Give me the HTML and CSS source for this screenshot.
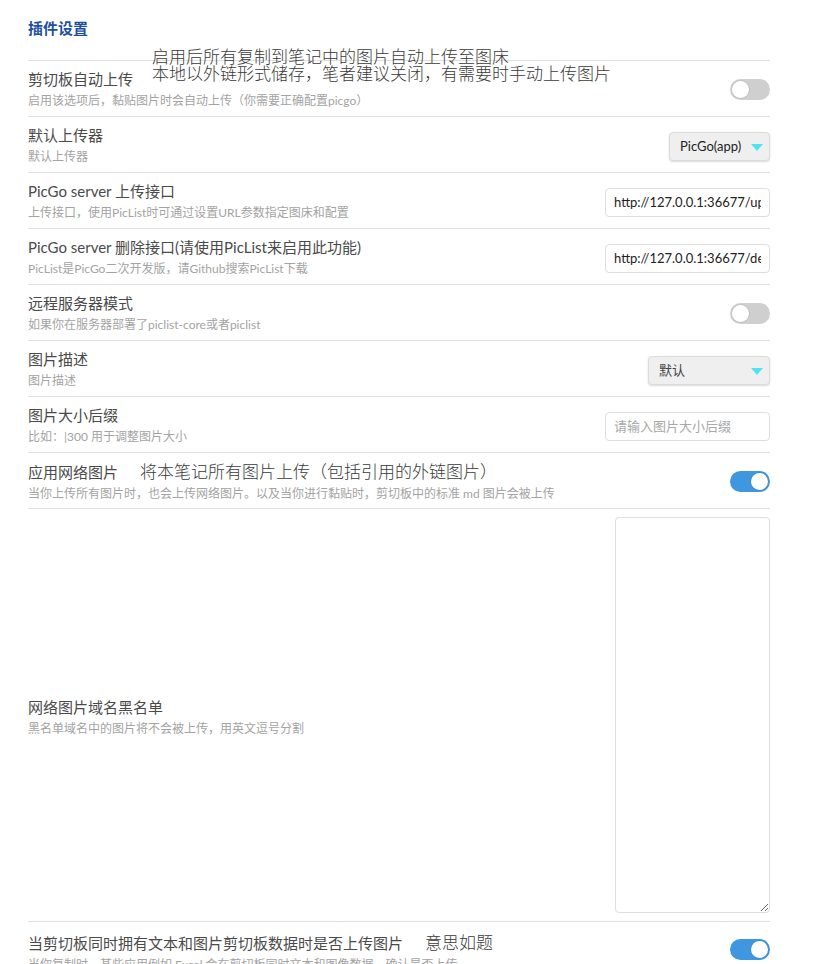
FILE: index.html
```html
<!DOCTYPE html>
<html lang="zh-CN">
<head>
<meta charset="utf-8">
<title>插件设置</title>
<link rel="stylesheet" href="styles.css">
</head>
<body>
<div class="settings">
  <h3 class="title">插件设置</h3>

  <div class="item">
    <div class="info">
      <div class="name">剪切板自动上传</div>
      <div class="desc">启用该选项后，黏贴图片时会自动上传（你需要正确配置picgo）</div>
    </div>
    <div class="control"><span class="toggle"></span></div>
    <div class="note note-float">启用后所有复制到笔记中的图片自动上传至图床<br>本地以外链形式储存，笔者建议关闭，有需要时手动上传图片</div>
  </div>

  <div class="item">
    <div class="info">
      <div class="name">默认上传器</div>
      <div class="desc">默认上传器</div>
    </div>
    <div class="control"><div class="select sel-uploader">PicGo(app)<span class="arrow"></span></div></div>
  </div>

  <div class="item">
    <div class="info">
      <div class="name">PicGo server 上传接口</div>
      <div class="desc">上传接口，使用PicList时可通过设置URL参数指定图床和配置</div>
    </div>
    <div class="control"><input class="text" type="text" value="http://127.0.0.1:36677/upload"></div>
  </div>

  <div class="item">
    <div class="info">
      <div class="name">PicGo server 删除接口(请使用PicList来启用此功能)</div>
      <div class="desc">PicList是PicGo二次开发版，请Github搜索PicList下载</div>
    </div>
    <div class="control"><input class="text" type="text" value="http://127.0.0.1:36677/delete"></div>
  </div>

  <div class="item">
    <div class="info">
      <div class="name">远程服务器模式</div>
      <div class="desc">如果你在服务器部署了piclist-core或者piclist</div>
    </div>
    <div class="control"><span class="toggle"></span></div>
  </div>

  <div class="item">
    <div class="info">
      <div class="name">图片描述</div>
      <div class="desc">图片描述</div>
    </div>
    <div class="control"><div class="select sel-desc">默认<span class="arrow"></span></div></div>
  </div>

  <div class="item">
    <div class="info">
      <div class="name">图片大小后缀</div>
      <div class="desc">比如：|300 用于调整图片大小</div>
    </div>
    <div class="control"><input class="text" type="text" placeholder="请输入图片大小后缀"></div>
  </div>

  <div class="item">
    <div class="info">
      <div class="name">应用网络图片<span class="note note-inline">将本笔记所有图片上传（包括引用的外链图片）</span></div>
      <div class="desc">当你上传所有图片时，也会上传网络图片。以及当你进行黏贴时，剪切板中的标准 md 图片会被上传</div>
    </div>
    <div class="control"><span class="toggle on"></span></div>
  </div>

  <div class="item item-tall">
    <div class="info">
      <div class="name">网络图片域名黑名单</div>
      <div class="desc">黑名单域名中的图片将不会被上传，用英文逗号分割</div>
    </div>
    <div class="control"><textarea class="area"></textarea></div>
  </div>

  <div class="item item-last">
    <div class="info">
      <div class="name">当剪切板同时拥有文本和图片剪切板数据时是否上传图片<span class="note note-inline">意思如题</span></div>
      <div class="desc">当你复制时，某些应用例如 Excel 会在剪切板同时文本和图像数据，确认是否上传。</div>
    </div>
    <div class="control"><span class="toggle on"></span></div>
  </div>
</div>
</body>
</html>
```

FILE: styles.css
```css
html, body {
  margin: 0;
  padding: 0;
  background: #ffffff;
  overflow: hidden;
}

body {
  font-family: "Lato", "Noto Sans CJK SC", sans-serif;
  color: #2e2e2e;
}

.settings {
  width: 742px;
  margin-left: 28px;
  padding-top: 16px;
}

.title {
  margin: 0 0 20px 0;
  font-size: 15px;
  line-height: 24px;
  font-weight: 700;
  color: #1f4f9f;
  font-family: "Noto Sans CJK SC", sans-serif;
}

.item {
  position: relative;
  display: flex;
  align-items: center;
  justify-content: space-between;
  border-top: 1px solid #e0e0e0;
  height: 55px;
}

.info {
  display: flex;
  flex-direction: column;
  gap: 3px;
  padding-top: 1px;
}

.name {
  font-size: 15px;
  line-height: 20px;
  color: #4a4a4a;
  white-space: nowrap;
}

.desc {
  font-size: 12px;
  line-height: 17px;
  color: #a3a3a3;
  white-space: nowrap;
}

.control {
  display: flex;
  align-items: center;
  flex-shrink: 0;
}

.note {
  font-family: "Noto Sans CJK SC", sans-serif;
  font-weight: 300;
  font-size: 17px;
  line-height: 17px;
  color: #3a3a3a;
  white-space: nowrap;
}

.note-float {
  position: absolute;
  left: 124px;
  top: -14px;
}

.note-inline {
  margin-left: 22px;
  line-height: 20px;
}

.toggle {
  position: relative;
  display: block;
  width: 40px;
  height: 21px;
  border-radius: 11px;
  background: #cfcfcf;
  margin-top: 2px;
}

.toggle::after {
  content: "";
  position: absolute;
  left: 2px;
  top: 2px;
  width: 17px;
  height: 17px;
  border-radius: 50%;
  background: #ffffff;
  box-shadow: 0 0 0 1px rgba(0, 0, 0, 0.06);
}

.toggle.on {
  background: #3f97e0;
}

.toggle.on::after {
  left: 21px;
}

.select {
  position: relative;
  box-sizing: border-box;
  height: 29px;
  padding: 0 30px 0 10px;
  font-size: 13px;
  line-height: 27px;
  color: #222222;
  background: #efefef;
  border: 1px solid #dcdcdc;
  border-radius: 4px;
  box-shadow: 0 1px 2px rgba(0, 0, 0, 0.15);
  margin-top: 3px;
}

.sel-uploader {
  width: 101px;
}

.sel-desc {
  width: 122px;
  color: #444444;
}

.arrow {
  position: absolute;
  right: 6px;
  top: 11px;
  width: 0;
  height: 0;
  border-left: 6px solid transparent;
  border-right: 6px solid transparent;
  border-top: 7px solid #4fe3f2;
}

.text {
  box-sizing: border-box;
  width: 165px;
  height: 29px;
  padding: 0 8px;
  font-family: "Lato", "Noto Sans CJK SC", sans-serif;
  font-size: 13px;
  color: #222222;
  background: #ffffff;
  border: 1px solid #dedede;
  border-radius: 4px;
  outline: none;
  margin-top: 3px;
}

.text::placeholder {
  color: #a8a8a8;
}

.item-tall {
  height: 412px;
}

.item-tall .info {
  padding-top: 4px;
}

.area {
  box-sizing: border-box;
  display: block;
  width: 155px;
  height: 396px;
  border: 1px solid #dedede;
  border-radius: 4px;
  background: #ffffff;
  outline: none;
  resize: vertical;
}

.item-last {
  align-items: flex-start;
  padding-top: 9px;
}

.item-last .control {
  padding-top: 6px;
}
```
